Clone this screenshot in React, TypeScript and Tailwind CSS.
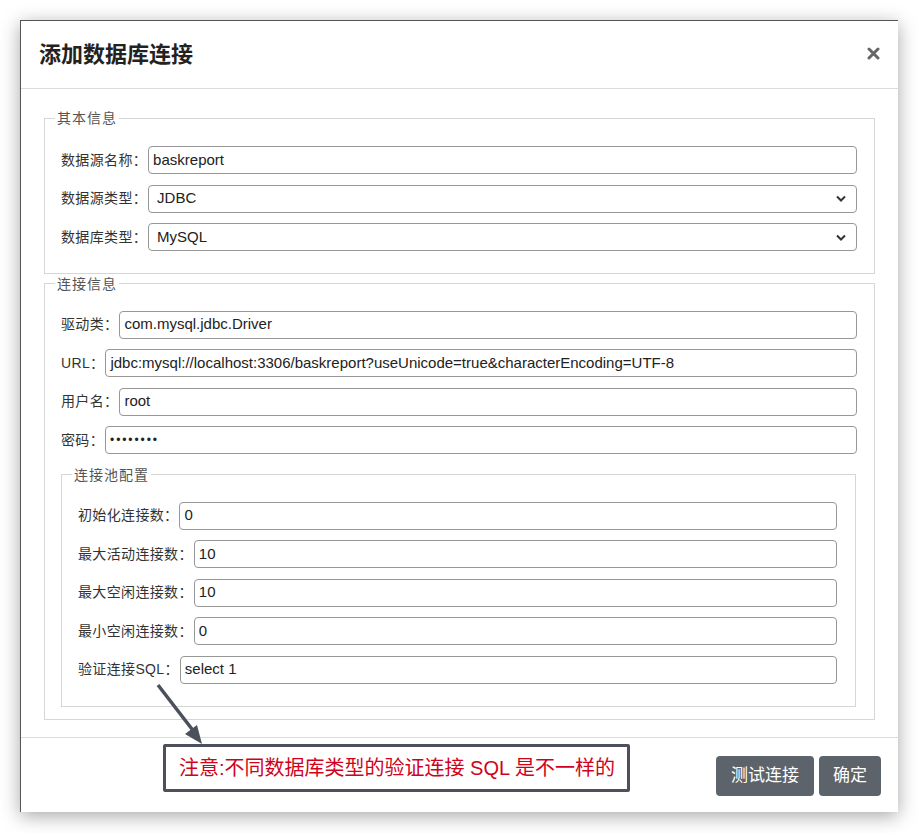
import { ReactNode } from 'react';

const font = { fontFamily: '"Liberation Sans", "Noto Sans CJK SC", sans-serif' };

const Row = ({ label, children }: { label: string; children: ReactNode }) => (
  <div className="flex items-center h-[28px] mb-[10.5px]">
    <span className="text-[14px] text-[#333] whitespace-nowrap tracking-[0.35px] pr-[1px]">{label}</span>
    {children}
  </div>
);

const Input = ({ value, small }: { value: string; small?: boolean }) => (
  <div
    className={`flex-1 h-full flex items-center border border-[#979797] rounded-[4px] px-[4px] text-[#222] ${
      small ? 'text-[12px] tracking-[1.9px]' : 'text-[15px]'
    }`}
  >
    {value}
  </div>
);

const Select = ({ value }: { value: string }) => (
  <div className="flex-1 h-full flex items-center justify-between border border-[#979797] rounded-[4px] pl-[8px] pr-[10px] text-[15px] text-[#222]">
    <span>{value}</span>
    <svg width="10" height="7" viewBox="0 0 10 7">
      <path d="M1 1.5 L5 5.5 L9 1.5" fill="none" stroke="#333" strokeWidth="2" />
    </svg>
  </div>
);

const Legend = ({ text }: { text: string }) => (
  <legend className="px-[2px] text-[14px] leading-[20px] text-[#555] tracking-[1px]">{text}</legend>
);

export default function App() {
  return (
    <div className="min-h-[833px] bg-white pt-[20px] pl-[20px]" style={font}>
      <div className="relative w-[878px] bg-white border-t border-l border-[#555] shadow-[0_4px_18px_rgba(0,0,0,0.35)]">
        {/* Header */}
        <div className="h-[68px] flex items-center justify-between pl-[18px] pr-[18px] border-b border-[#dcdcdc]">
          <h1 className="text-[22px] font-bold text-[#222]">添加数据库连接</h1>
          <svg width="13" height="13" viewBox="0 0 13 13" className="mt-[-2px]">
            <path d="M2 2 L11 11 M11 2 L2 11" stroke="#666" strokeWidth="3" strokeLinecap="round" />
          </svg>
        </div>

        {/* Body */}
        <div className="px-[23px] pt-[19px] pb-[17px]">
          <fieldset className="border border-[#d6d6d6] pl-[10px] pr-[17px] pb-[11px]">
            <Legend text="其本信息" />
            <div className="pl-[6px] mt-[18px]">
              <Row label="数据源名称：">
                <Input value="baskreport" />
              </Row>
              <Row label="数据源类型：">
                <Select value="JDBC" />
              </Row>
              <Row label="数据库类型：">
                <Select value="MySQL" />
              </Row>
            </div>
          </fieldset>

          <fieldset className="border border-[#d6d6d6] pl-[10px] pr-[17px] pb-[12px]">
            <Legend text="连接信息" />
            <div className="pl-[6px] mt-[17px]">
              <Row label="驱动类：">
                <Input value="com.mysql.jdbc.Driver" />
              </Row>
              <Row label="URL：">
                <Input value="jdbc:mysql://localhost:3306/baskreport?useUnicode=true&characterEncoding=UTF-8" />
              </Row>
              <Row label="用户名：">
                <Input value="root" />
              </Row>
              <Row label="密码：">
                <Input value="••••••••" small />
              </Row>

              <fieldset className="border border-[#d6d6d6] pl-[10px] pr-[18px] pb-[12px] mt-[1px] mr-[1px]">
                <Legend text="连接池配置" />
                <div className="pl-[6px] mt-[17px]">
                  <Row label="初始化连接数：">
                    <Input value="0" />
                  </Row>
                  <Row label="最大活动连接数：">
                    <Input value="10" />
                  </Row>
                  <Row label="最大空闲连接数：">
                    <Input value="10" />
                  </Row>
                  <Row label="最小空闲连接数：">
                    <Input value="0" />
                  </Row>
                  <Row label="验证连接SQL：">
                    <Input value="select 1" />
                  </Row>
                </div>
              </fieldset>
            </div>
          </fieldset>
        </div>

        {/* Footer */}
        <div className="h-[75px] border-t border-[#dcdcdc] flex items-start justify-end gap-[5px] pt-[18px] pr-[17px]">
          <button className="h-[40px] w-[98px] rounded-[4px] bg-[#5c636a] text-white text-[17px]">测试连接</button>
          <button className="h-[40px] w-[62px] rounded-[4px] bg-[#5c636a] text-white text-[17px]">确定</button>
        </div>

        {/* Annotation */}
        <div className="absolute left-[142px] top-[723px] w-[467px] h-[48px] border-[3px] border-[#4b505a] rounded-[2px] bg-white flex items-center pl-[13px] text-[20px] text-[#d0021b] whitespace-nowrap">
          注意:不同数据库类型的验证连接 SQL 是不一样的
        </div>
        <svg className="absolute left-[130px] top-[660px]" width="60" height="66" viewBox="0 0 60 66">
          <line x1="7" y1="4" x2="44" y2="52" stroke="#4b505a" strokeWidth="3.5" />
          <polygon points="51,63 34,53 46,44" fill="#4b505a" />
        </svg>
      </div>
    </div>
  );
}
